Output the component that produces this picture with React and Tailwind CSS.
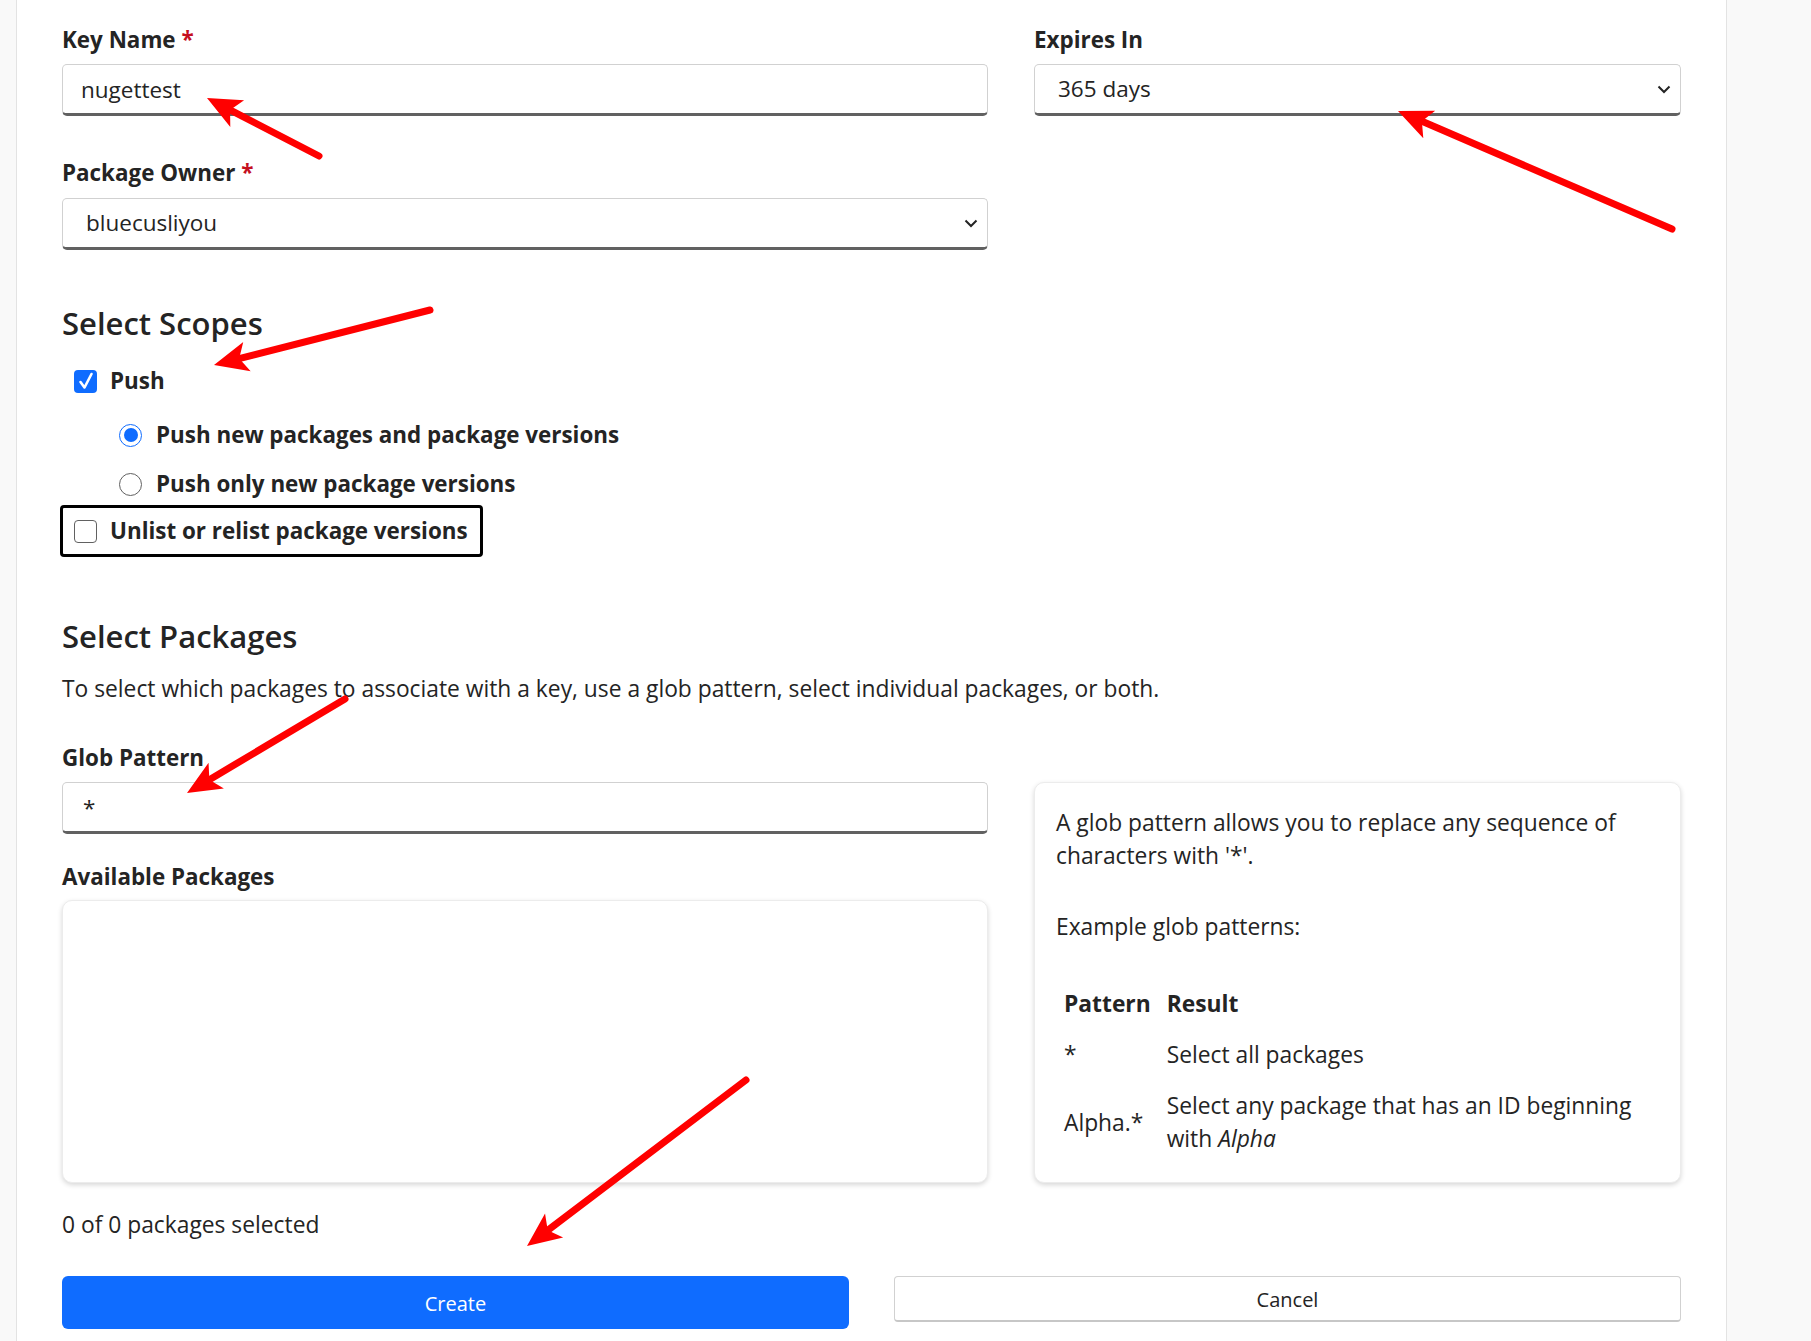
import React from 'react';

const arrows = [
  { from: [319, 156], to: [207, 98] },
  { from: [1672, 229], to: [1398, 111] },
  { from: [430, 310], to: [214, 365] },
  { from: [345, 699], to: [187, 793] },
  { from: [746, 1080], to: [527, 1246] },
];

const Arrow = ({ from, to }) => {
  const [x1, y1] = from;
  const [x2, y2] = to;
  const dx = x2 - x1;
  const dy = y2 - y1;
  const len = Math.hypot(dx, dy);
  const ux = dx / len;
  const uy = dy / len;
  const headLen = 34;
  const headW = 15;
  const bx = x2 - ux * headLen;
  const by = y2 - uy * headLen;
  const pts = [
    [x2, y2],
    [bx - uy * headW, by + ux * headW],
    [x2 - ux * (headLen - 8), y2 - uy * (headLen - 8)],
    [bx + uy * headW, by - ux * headW],
  ]
    .map((p) => p.join(','))
    .join(' ');
  return (
    <g>
      <line x1={x1} y1={y1} x2={bx + ux * 6} y2={by + uy * 6} stroke="#ff0000" strokeWidth="7" strokeLinecap="round" />
      <polygon points={pts} fill="#ff0000" />
    </g>
  );
};

const Label = ({ children, required, className = '' }) => (
  <label className={`block text-[22.4px] leading-[30px] font-bold text-[#242424] ${className}`}>
    {children}
    {required && <span className="text-[#c50f1f]"> *</span>}
  </label>
);

const inputCls =
  'w-full h-[52px] rounded-[5px] border border-[#d1d1d1] border-b-[3px] border-b-[#616161] bg-white text-[22.5px] text-[#242424] outline-none';

const FakeSelect = ({ value, className = '' }) => (
  <div className={`${inputCls} flex items-center justify-between pl-[23px] pr-[9px] ${className}`}>
    <span>{value}</span>
    <svg width="14" height="9" viewBox="0 0 14 9" fill="none">
      <polyline points="1.5,1.5 7,7 12.5,1.5" stroke="#242424" strokeWidth="2" />
    </svg>
  </div>
);

const CheckBox = ({ checked }) =>
  checked ? (
    <span className="flex h-[23px] w-[23px] items-center justify-center rounded-[4px] bg-[#0f6cff]">
      <svg width="16" height="18" viewBox="0 0 16 18" fill="none">
        <path d="M2.5 10 L6.5 15.5 L13.5 2" stroke="#ffffff" strokeWidth="2.6" strokeLinecap="round" strokeLinejoin="round" />
      </svg>
    </span>
  ) : (
    <span className="block h-[23px] w-[23px] rounded-[4px] border border-[#616161] bg-white" />
  );

const Radio = ({ checked }) =>
  checked ? (
    <span className="flex h-[23px] w-[23px] items-center justify-center rounded-full border-[1.5px] border-[#0f6cff] bg-white">
      <span className="block h-[14px] w-[14px] rounded-full bg-[#0f6cff]" />
    </span>
  ) : (
    <span className="block h-[23px] w-[23px] rounded-full border border-[#616161] bg-white" />
  );

export default function App() {
  return (
    <div className="relative min-h-screen bg-[#f9f9f9] font-['Segoe_UI','Open_Sans',sans-serif] text-[#242424]">
      <div className="ml-[16px] min-h-[1341px] w-[1711px] border-x border-[#e3e3e3] bg-white px-[45px] pt-[25px]">
        {/* Key / Expires / Owner */}
        <div className="grid grid-cols-[926px_1fr] gap-x-[46px]">
          <div>
            <Label required>Key Name</Label>
            <input className={`${inputCls} mt-[9px] px-[18px]`} defaultValue="nugettest" />
            <Label required className="mt-[42px]">
              Package Owner
            </Label>
            <FakeSelect value="bluecusliyou" className="mt-[10px]" />
          </div>
          <div>
            <Label>Expires In</Label>
            <FakeSelect value="365 days" className="mt-[9px]" />
          </div>
        </div>

        {/* Scopes */}
        <h3 className="mt-[53px] text-[31px] leading-[40px] font-semibold">Select Scopes</h3>
        <div className="mt-[23px] flex h-[30px] items-center gap-[13px] pl-[12px]">
          <CheckBox checked />
          <span className="text-[22.4px] font-bold">Push</span>
        </div>
        <div className="mt-[24px] flex h-[30px] items-center gap-[14px] pl-[57px]">
          <Radio checked />
          <span className="text-[22.4px] font-bold">Push new packages and package versions</span>
        </div>
        <div className="mt-[19px] flex h-[30px] items-center gap-[14px] pl-[57px]">
          <Radio />
          <span className="text-[22.4px] font-bold">Push only new package versions</span>
        </div>
        <div className="-ml-[2px] mt-[6px] flex h-[52px] w-fit items-center gap-[13px] rounded-[4px] border-[3px] border-black pl-[11px] pr-[12px]">
          <CheckBox />
          <span className="text-[22.4px] font-bold">Unlist or relist package versions</span>
        </div>

        {/* Packages */}
        <h3 className="mt-[59px] text-[31px] leading-[40px] font-semibold">Select Packages</h3>
        <p className="mt-[18px] text-[22.8px] leading-[30px]">
          To select which packages to associate with a key, use a glob pattern, select individual packages, or both.
        </p>

        <div className="mt-[39px] grid grid-cols-[926px_1fr] gap-x-[46px]">
          <div className="flex flex-col">
            <Label>Glob Pattern</Label>
            <input className={`${inputCls} mt-[9px] px-[20px] text-[19px]`} defaultValue="*" />
            <Label className="mt-[28px]">Available Packages</Label>
            <div className="mt-[8px] h-[283px] rounded-[10px] border border-[#ececec] bg-white shadow-[0_2px_5px_rgba(0,0,0,0.16)]" />
          </div>
          <div className="flex flex-col pt-[39px]">
            <div className="flex-1 rounded-[10px] border border-[#ececec] bg-white px-[21px] pt-[23px] text-[22.8px] leading-[33px] shadow-[0_2px_5px_rgba(0,0,0,0.16)]">
              <p>
                A glob pattern allows you to replace any sequence of
                <br />
                characters with '*'.
              </p>
              <p className="mt-[38px]">Example glob patterns:</p>
              <table className="mt-[35px] border-collapse">
                <thead>
                  <tr>
                    <th className="px-[8px] py-[9px] text-left font-bold">Pattern</th>
                    <th className="px-[8px] py-[9px] text-left font-bold">Result</th>
                  </tr>
                </thead>
                <tbody>
                  <tr>
                    <td className="px-[8px] py-[9px] align-middle">*</td>
                    <td className="px-[8px] py-[9px]">Select all packages</td>
                  </tr>
                  <tr>
                    <td className="px-[8px] py-[9px] align-middle">Alpha.*</td>
                    <td className="px-[8px] py-[9px]">
                      Select any package that has an ID beginning
                      <br />
                      with <em>Alpha</em>
                    </td>
                  </tr>
                </tbody>
              </table>
            </div>
          </div>
        </div>

        <p className="mt-[27px] text-[22.8px] leading-[30px]">0 of 0 packages selected</p>

        <div className="mt-[36px] grid grid-cols-2 gap-x-[45px]">
          <button className="h-[53px] rounded-[6px] bg-[#0f6cff] pt-[2px] text-[20px] text-white">Create</button>
          <button className="h-[46px] rounded-[4px] border border-[#d1d1d1] border-b-[2px] border-b-[#c7c7c7] bg-white pt-[2px] text-[20px] text-[#242424]">
            Cancel
          </button>
        </div>
      </div>

      <svg className="pointer-events-none absolute left-0 top-0" width="1811" height="1341">
        {arrows.map((a, i) => (
          <Arrow key={i} {...a} />
        ))}
      </svg>
    </div>
  );
}
